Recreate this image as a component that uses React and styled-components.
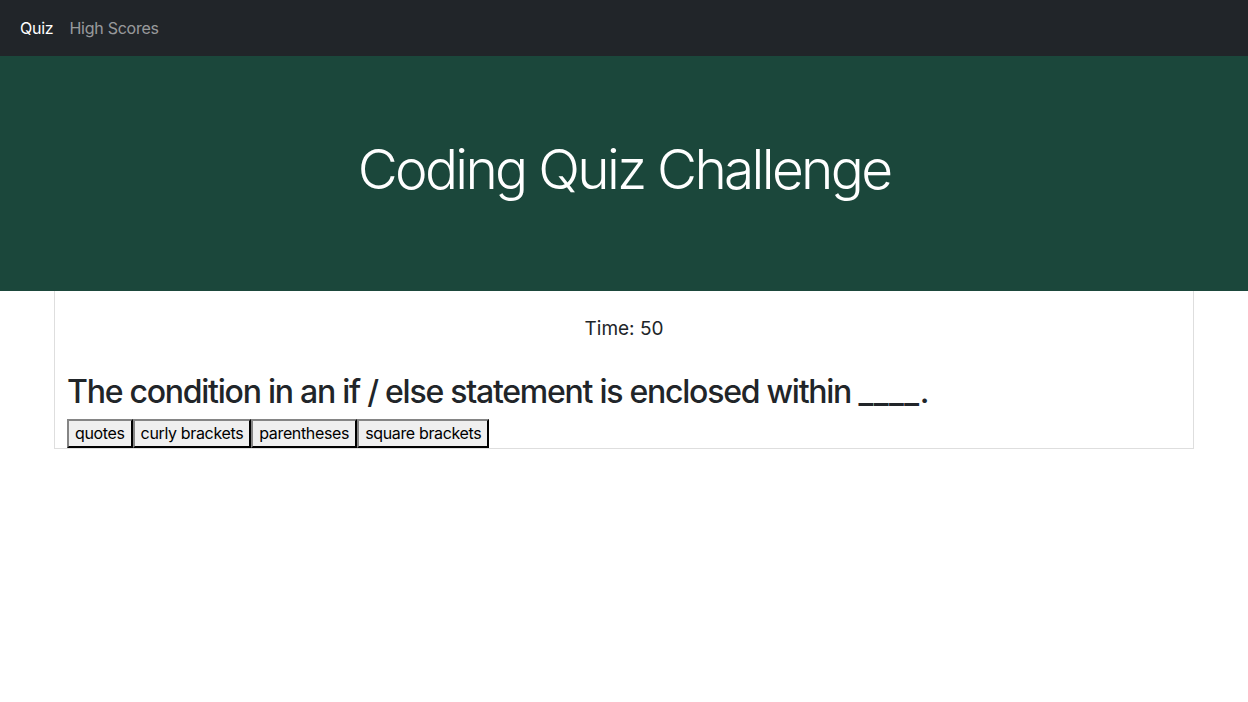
import React from "react";
import styled, { createGlobalStyle } from "styled-components";

const GlobalStyle = createGlobalStyle`
  body {
    margin: 0;
    font-family: Inter, "Noto Sans", "Liberation Sans", sans-serif;
    color: #212529;
    background: #fff;
  }
`;

const Navbar = styled.nav`
  display: flex;
  align-items: center;
  height: 56px;
  padding: 0 12px;
  background: #212529;
`;

const NavLink = styled.a`
  padding: 8px;
  font-size: 16px;
  letter-spacing: -0.25px;
  text-decoration: none;
  color: ${p => (p.$active ? "#fff" : "rgba(255,255,255,0.55)")};
  cursor: pointer;
`;

const Hero = styled.header`
  display: flex;
  justify-content: center;
  align-items: center;
  box-sizing: border-box;
  height: 235px;
  padding-bottom: 10px;
  background: #1b473b;
`;

const Title = styled.h1`
  margin: 0;
  font-size: 55px;
  font-weight: 300;
  line-height: 1.2;
  color: #fff;
  letter-spacing: -2.7px;
`;

const Card = styled.main`
  width: 1140px;
  margin: 0 auto;
  box-sizing: border-box;
  border: 1px solid #dedede;
  border-top: none;
  padding: 0 12px;
`;

const Timer = styled.p`
  margin: 0;
  padding-top: 23px;
  text-align: center;
  font-size: 19px;
  line-height: 30px;
`;

const Question = styled.h2`
  margin: 29px 0 8px;
  font-size: 32px;
  font-weight: 500;
  line-height: 38px;
  letter-spacing: -1.25px;
`;

const Blank = styled.span`
  letter-spacing: 0.5px;
`;

const Choices = styled.div`
  display: flex;
`;

const Choice = styled.button`
  font-family: inherit;
  font-size: 16px;
  letter-spacing: -0.35px;
  line-height: 23px;
  padding: 1px 6px;
  color: #000;
  background: #efefef;
  border: 2px outset #767676;
  border-color: #858585 #3a3a3a #3a3a3a #858585;
  border-radius: 0;
`;

const choices = ["quotes", "curly brackets", "parentheses", "square brackets"];

export default function App() {
  return (
    <>
      <GlobalStyle />
      <Navbar>
        <NavLink $active>Quiz</NavLink>
        <NavLink>High Scores</NavLink>
      </Navbar>
      <Hero>
        <Title>Coding Quiz Challenge</Title>
      </Hero>
      <Card>
        <Timer>Time: 50</Timer>
        <Question>
          The condition in an if / else statement is enclosed within <Blank>____</Blank>.
        </Question>
        <Choices>
          {choices.map(c => (
            <Choice key={c}>{c}</Choice>
          ))}
        </Choices>
      </Card>
    </>
  );
}
